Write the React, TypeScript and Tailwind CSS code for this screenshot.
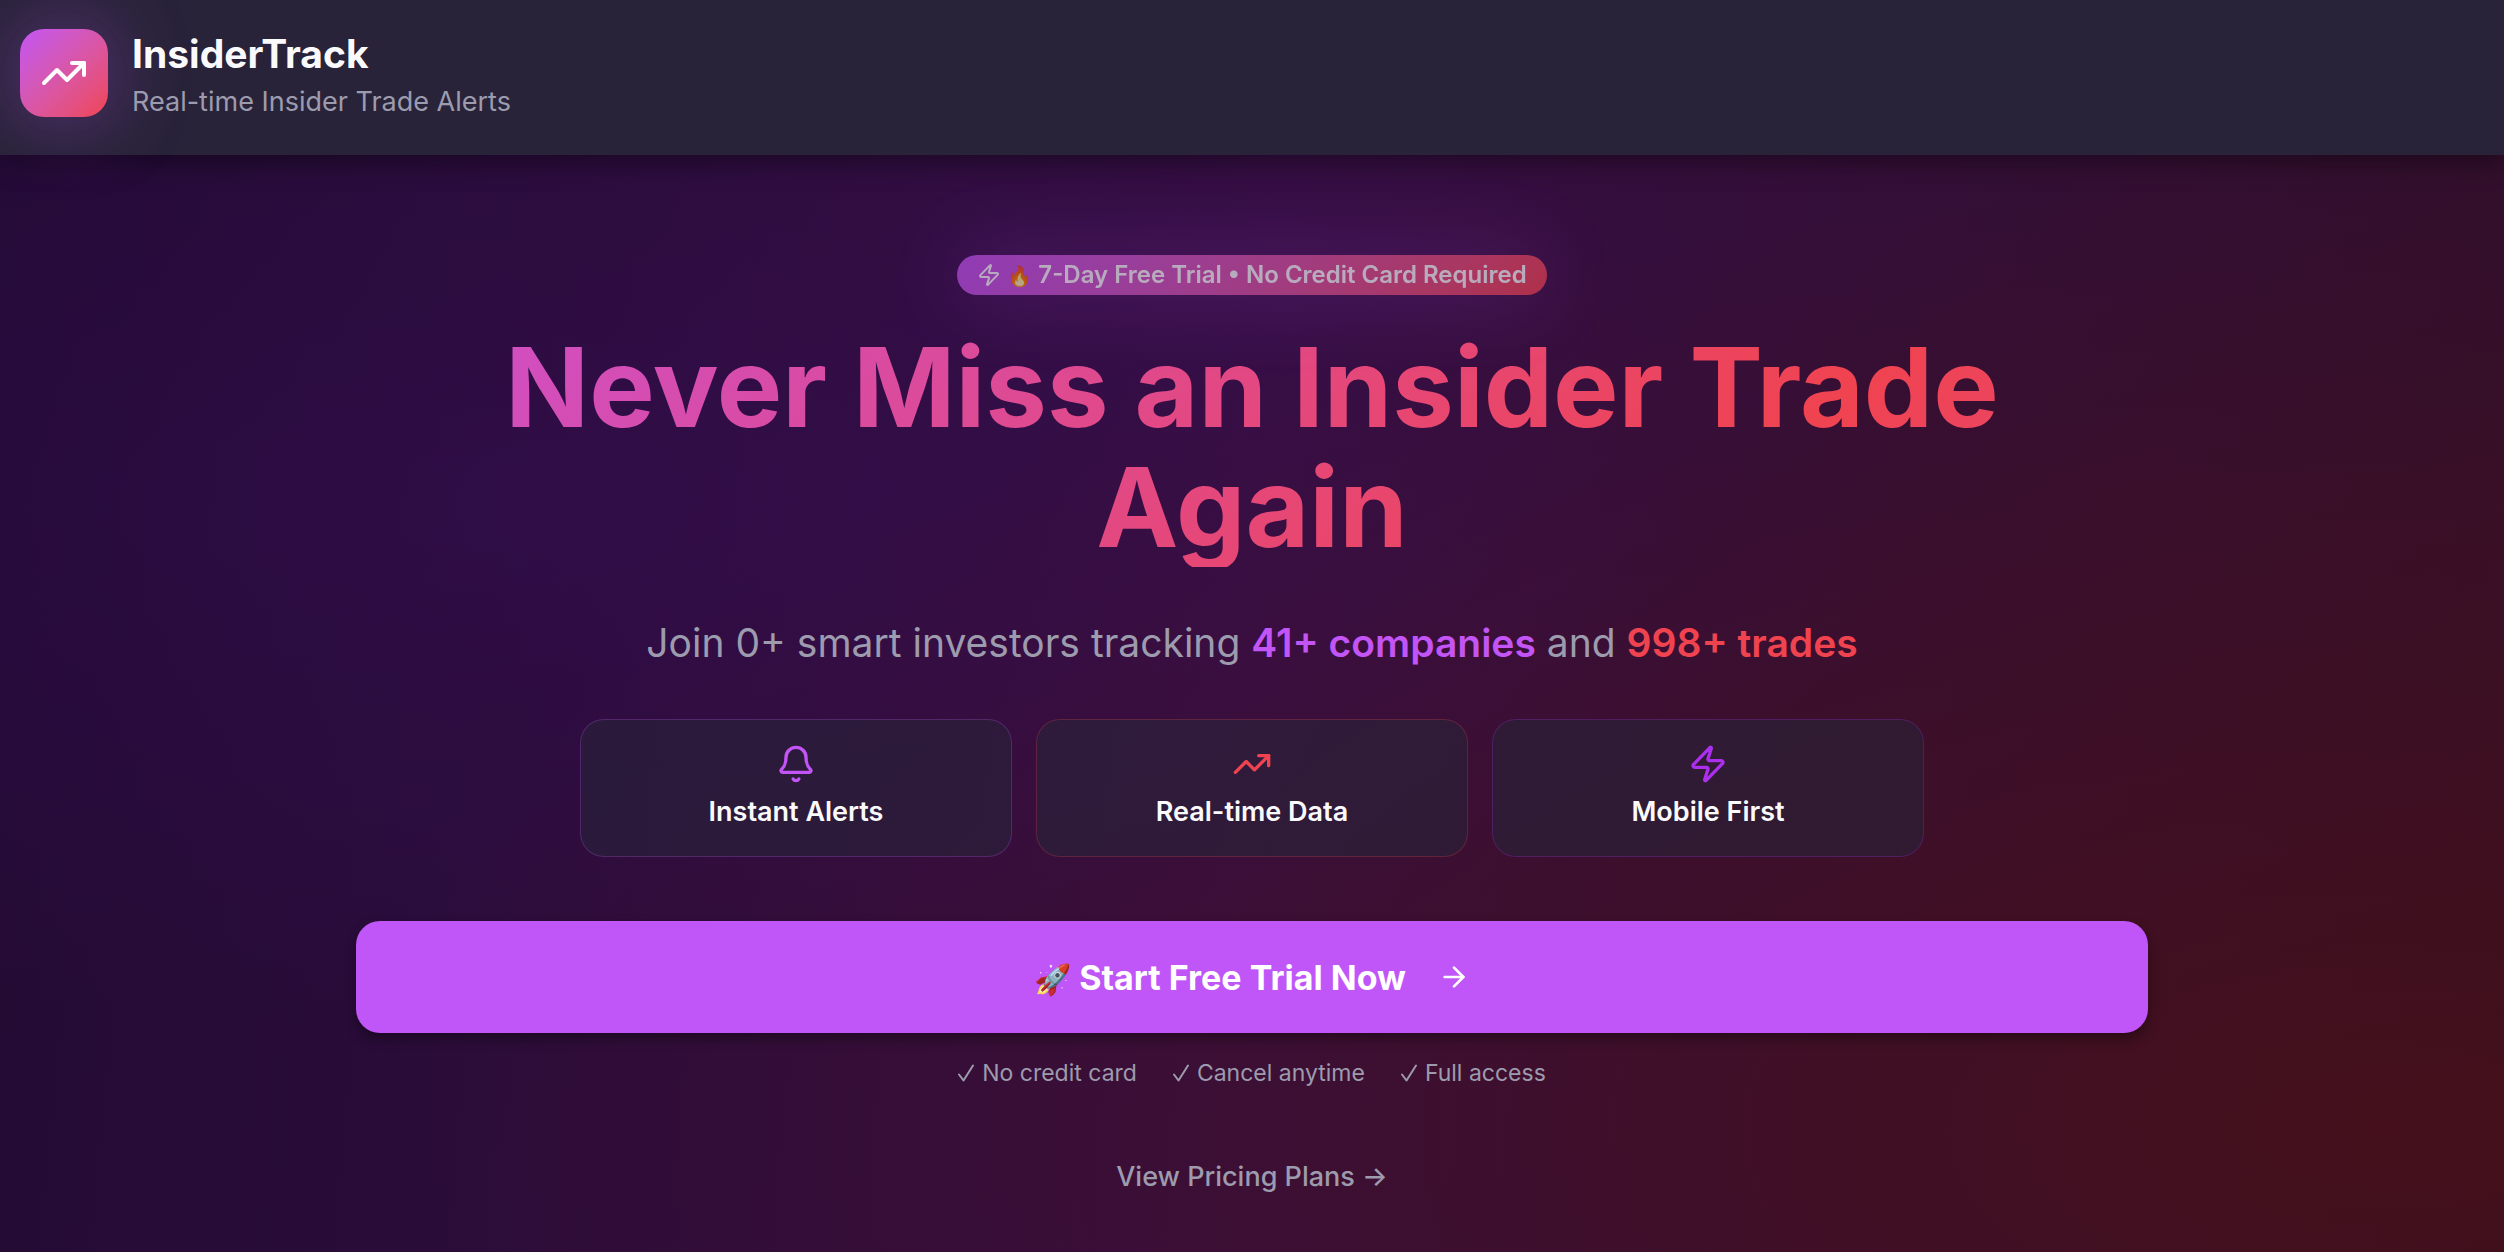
import { ArrowRight, Bell, TrendingUp, Zap } from "lucide-react";

const features = [
  { label: "Instant Alerts", icon: Bell, border: "border-[#c354f5]/25", color: "text-[#c354f5]" },
  { label: "Real-time Data", icon: TrendingUp, border: "border-[#f04350]/25", color: "text-[#f04350]" },
  { label: "Mobile First", icon: Zap, border: "border-[#a92ee8]/25", color: "text-[#ab2fec]" },
];

const perks = ["No credit card", "Cancel anytime", "Full access"];

function Tick() {
  return (
    <svg viewBox="0 0 16 18" className="h-[18px] w-4" fill="none" stroke="currentColor" strokeWidth="2" strokeLinecap="round" strokeLinejoin="round" aria-hidden="true">
      <path d="M1 10.5 5.5 16.5 15 1.5" />
    </svg>
  );
}

function Header() {
  return (
    <header className="relative flex items-center gap-6 border-b border-[#282339] bg-[#282339] px-5 pt-6 pb-8 shadow-[0_8px_24px_rgba(0,0,0,0.4)]">
      <div className="flex size-22 shrink-0 items-center justify-center rounded-3xl bg-linear-135 from-[#c354f5] to-[#f04350] shadow-[0_0_80px_rgba(195,84,245,0.4)]">
        <TrendingUp className="size-12 text-white" strokeWidth={2} />
      </div>
      <div className="pt-0.5">
        <p className="text-[39px] leading-[56px] font-bold text-[#fafafc]">InsiderTrack</p>
        <p className="text-[27px] leading-10 text-[#9d9bae]">Real-time Insider Trade Alerts</p>
      </div>
    </header>
  );
}

export default function App() {
  return (
    <div className="min-h-screen bg-[radial-gradient(ellipse_at_20%_40%,rgba(64,14,110,0.24),transparent_50%),radial-gradient(ellipse_at_95%_90%,rgba(80,16,16,0.6),transparent_60%),linear-gradient(96deg,#220b33_0%,#350e42_50%,#320f2a_100%)] font-['Inter',sans-serif]">
      <Header />
      <main className="mx-auto flex w-full max-w-[1792px] flex-col items-center pt-25 pb-14 text-center">
        <div className="flex h-10 items-center gap-1.5 rounded-full bg-linear-135 from-[#c354f5] to-[#f04350] px-5 text-2xl font-semibold text-white opacity-65 shadow-[0_0_80px_rgba(195,84,245,0.35)]">
          <Zap className="size-6" />
          <span>
            <span className="text-xl">🔥</span> 7-Day Free Trial • No Credit Card Required
          </span>
        </div>

        <h1 className="mt-8 w-full bg-[linear-gradient(135deg,#c354f5_0%,#f04350_50%,#c354f5_100%)] bg-[length:200%_200%] bg-[position:20%_50%] bg-clip-text text-[110px] leading-[120px] font-bold text-transparent">
          Never Miss an Insider Trade Again
        </h1>

        <p className="mt-12 text-[39px] leading-14 text-[#9d9bae]">
          Join 0+ smart investors tracking <strong className="font-semibold text-[#c354f5]">41+ companies</strong> and{" "}
          <strong className="font-semibold text-[#f04350]">998+ trades</strong>
        </p>

        <ul className="mt-12 grid w-full max-w-[1344px] grid-cols-3 gap-6">
          {features.map(({ label, icon: Icon, border, color }) => (
            <li key={label} className={`flex flex-col items-center gap-2 rounded-3xl border bg-[#282339]/60 p-6 ${border}`}>
              <Icon className={`size-10 ${color}`} />
              <span className="text-[27px] leading-10 font-semibold text-[#fafafc]">{label}</span>
            </li>
          ))}
        </ul>

        <button
          type="button"
          className="mt-16 flex h-28 w-full items-center justify-center rounded-3xl bg-[#c056f8] text-[34px] font-bold text-white shadow-[0_6px_12px_rgba(0,0,0,0.35)]"
        >
          <span>
            <span className="text-[30px]">🚀</span> Start Free Trial Now
          </span>
          <ArrowRight className="ml-8 size-8" />
        </button>

        <ul className="mt-6 flex justify-center gap-9 text-[23px] leading-8 text-[#9d9bae]">
          {perks.map((perk) => (
            <li key={perk} className="flex items-center gap-2">
              <Tick />
              {perk}
            </li>
          ))}
        </ul>

        <a href="#pricing" className="mt-17 text-[27px] leading-10 font-medium text-[#9d9bae]">
          View Pricing Plans →
        </a>
      </main>
    </div>
  );
}
